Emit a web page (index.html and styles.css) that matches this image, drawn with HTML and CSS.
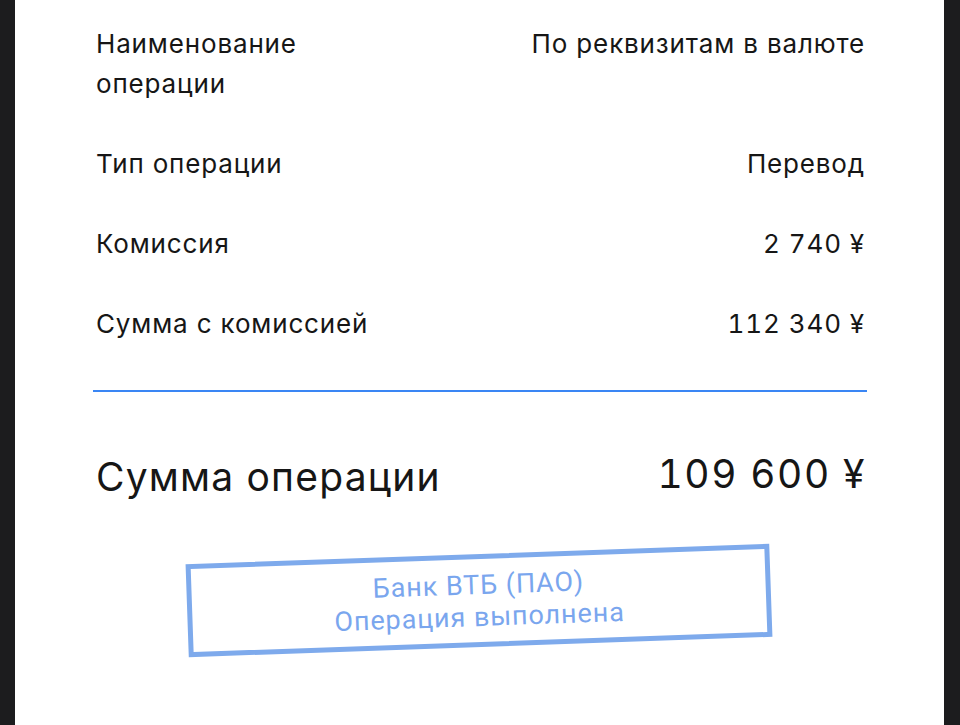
FILE: index.html
```html
<!DOCTYPE html>
<html lang="ru">
<head>
<meta charset="utf-8">
<link rel="stylesheet" href="styles.css">
</head>
<body>
<div class="sheet">
  <div class="rows">
    <div class="row">
      <div class="label label-narrow">Наименование операции</div>
      <div class="value">По реквизитам в валюте</div>
    </div>
    <div class="row">
      <div class="label">Тип операции</div>
      <div class="value">Перевод</div>
    </div>
    <div class="row">
      <div class="label">Комиссия</div>
      <div class="value num">2 740 ¥</div>
    </div>
    <div class="row">
      <div class="label">Сумма с комиссией</div>
      <div class="value num">112 340 ¥</div>
    </div>
  </div>
  <div class="divider"></div>
  <div class="total">
    <div class="total-label">Сумма операции</div>
    <div class="total-value">109 600 ¥</div>
  </div>
  <div class="stamp-wrap">
    <div class="stamp">
      <div>Банк ВТБ (ПАО)</div>
      <div>Операция выполнена</div>
    </div>
  </div>
</div>
</body>
</html>
```
FILE: styles.css
```css
html, body {
  margin: 0;
  padding: 0;
}
body {
  background: #1c1c1e;
  height: 725px;
  overflow: hidden;
  font-family: Inter, "Noto Sans", sans-serif;
  color: #161616;
}
.sheet {
  background: #ffffff;
  margin: 0 16px 0 15px;
  height: 725px;
  padding: 24px 80px 0 81px;
  box-sizing: border-box;
}
.rows {
  display: flex;
  flex-direction: column;
  gap: 40px;
}
.row {
  display: flex;
  justify-content: space-between;
  align-items: flex-start;
  font-size: 26px;
  line-height: 40px;
  letter-spacing: 0.85px;
}
.label-narrow {
  max-width: 260px;
}
.value {
  text-align: right;
  margin-right: -1px;
}
.num {
  font-variant-numeric: tabular-nums;
  letter-spacing: 0.9px;
}
.divider {
  height: 2px;
  background: #3a86f4;
  margin: 46px -3px 0 -3px;
}
.total {
  display: flex;
  justify-content: space-between;
  align-items: center;
  margin-top: 61px;
  line-height: 48px;
}
.total-label {
  font-size: 39px;
  letter-spacing: 1.2px;
}
.total-value {
  font-size: 39px;
  margin-top: -6px;
  margin-right: -2px;
  font-variant-numeric: tabular-nums;
  letter-spacing: 1.6px;
}
.stamp-wrap {
  display: flex;
  justify-content: center;
  margin-top: 53px;
  padding-right: 2px;
}
.stamp {
  width: 574px;
  height: 83px;
  border: 5px solid #7eaaec;
  transform: rotate(-2deg);
  color: #7aa6ee;
  font-family: Roboto, "Noto Sans", sans-serif;
  font-size: 27px;
  letter-spacing: 0.9px;
  line-height: 32px;
  text-align: center;
  display: flex;
  flex-direction: column;
  justify-content: center;
}
```
